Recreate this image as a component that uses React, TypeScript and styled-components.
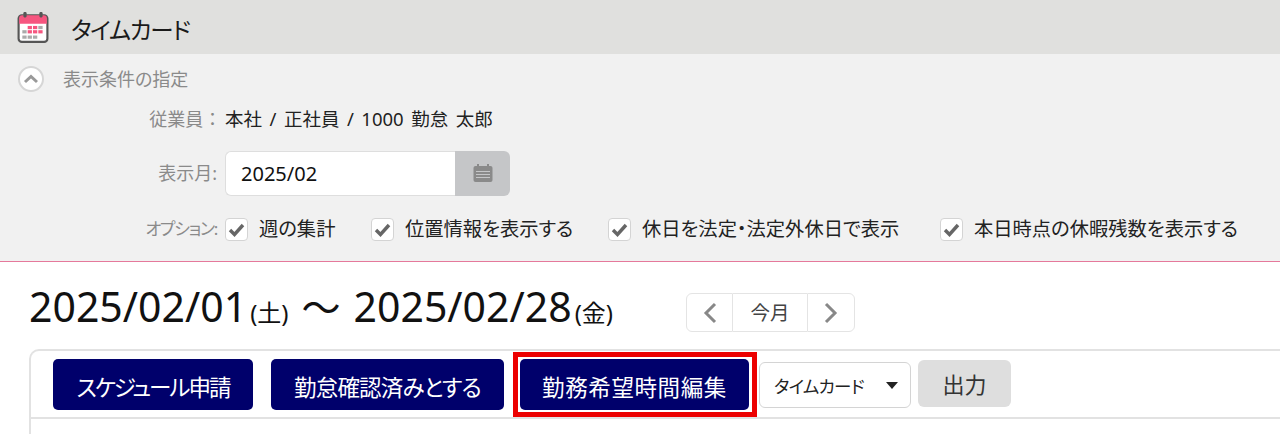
import React from "react";
import styled, { createGlobalStyle } from "styled-components";

const Global = createGlobalStyle`
  html, body { margin: 0; padding: 0; background: #fff; overflow: hidden; }
  body { font-family: "Noto Sans", "Noto Sans CJK JP", sans-serif; color: #222; font-feature-settings: "palt" 1; }
`;
const Page = styled.div`width: 1280px; height: 434px; overflow: hidden; display: flex; flex-direction: column;`;
const Header = styled.header`height: 54px; background: #e0e0de; display: flex; align-items: center; padding-left: 17px; gap: 22px; box-sizing: border-box;`;
const Title = styled.h1`margin: 5px 0 0; font-size: 23.5px; letter-spacing: -1.3px; font-weight: 400; color: #1a1a1a; line-height: 30px;`;
const Filter = styled.section`height: 208px; box-sizing: border-box; background: #f1f1f1; border-bottom: 1px solid #e5799b; display: flex; flex-direction: column;`;
const Toggle = styled.div`display: flex; align-items: center; height: 50px; padding: 0 0 0 18px; gap: 19px; color: #8a8a8a; font-size: 18px;`;
const ToggleText = styled.span`margin-top: -3px;`;
const Round = styled.span`width: 26px; height: 26px; border-radius: 50%; box-sizing: border-box; background: #fff; border: 2px solid #d6d6d6; display: flex; align-items: center; justify-content: center;`;
const Row = styled.div<{ $h: number }>`display: flex; align-items: center; height: ${(p) => p.$h}px;`;
const Label = styled.span<{ $tight?: boolean }>`width: 217px; flex: none; margin-bottom: 3px; text-align: right; color: #8a8a8a; font-size: ${(p) => (p.$tight ? 17 : 18)}px; letter-spacing: ${(p) => (p.$tight ? -1.3 : 0)}px; white-space: nowrap;`;
const Value = styled.span`margin: 0 0 2px 8px; font-size: 18.5px; word-spacing: 2.7px; color: #222; white-space: nowrap;`;
const DateGroup = styled.div`display: flex; margin-left: 8px; height: 45px;`;
const DateInput = styled.div`width: 230px; box-sizing: border-box; background: #fff; border: 1px solid #dedede; border-right: 0; border-radius: 6px 0 0 6px; padding-left: 15px; font-size: 20px; display: flex; align-items: center; color: #111;`;
const DateBtn = styled.div`width: 55px; background: #c5c6c8; border-radius: 0 6px 6px 0; display: flex; align-items: center; justify-content: center;`;
const Options = styled.div`display: flex; margin-left: 8px;`;
const Option = styled.label<{ $w: number }>`display: flex; align-items: center; width: ${(p) => p.$w}px; font-size: 19.3px; color: #222; white-space: nowrap; gap: 11px;`;
const OptionText = styled.span`margin-bottom: 3px;`;
const Check = styled.span`width: 23px; height: 23px; flex: none; box-sizing: border-box; background: #fff; border: 1px solid #d4d4d4; border-radius: 4px; display: flex; align-items: center; justify-content: center;`;
const RangeRow = styled.div`display: flex; align-items: flex-start; height: 87px; padding-left: 29px; box-sizing: border-box;`;
const Range = styled.div`font-size: 41px; line-height: 50px; margin-top: 19px; color: #111; width: 657px; white-space: nowrap; display: flex; align-items: baseline;`;
const Small = styled.span`font-size: 24px; margin-left: 3px;`;
const Tilde = styled.span`margin: 0 13px 0 13px; font-size: 39px;`;
const Pager = styled.div`display: flex; height: 39px; margin-top: 31px;`;
const PagerBtn = styled.div<{ $side: "l" | "r" }>`width: ${(p) => (p.$side === "l" ? 47 : 48)}px; box-sizing: border-box; border: 1px solid #e4e4e4; border-radius: ${(p) => (p.$side === "l" ? "6px 0 0 6px" : "0 6px 6px 0")}; display: flex; align-items: center; justify-content: center;`;
const PagerMid = styled.div`width: 74px; box-sizing: border-box; border: 1px solid #e4e4e4; border-width: 1px 0; display: flex; align-items: center; justify-content: center; font-size: 19.5px; color: #444; padding-bottom: 2px;`;
const Panel = styled.div`margin-left: 29px; border: 2px solid #e2e2e2; border-right: 0; border-bottom: 0; border-radius: 10px 0 0 0; flex: 1;`;
const Toolbar = styled.div`height: 68px; box-sizing: border-box; border-bottom: 2px solid #e2e2e2; display: flex; align-items: flex-start; padding: 8px 0 0 22px;`;
const Primary = styled.button<{ $w: number; $hl?: boolean; $ml?: number; $ls: number }>`
  position: relative; width: ${(p) => p.$w}px; height: 51px; margin-left: ${(p) => p.$ml ?? 0}px; border: 0; border-radius: 5px;
  background: #00006b; color: #fff; font: inherit; font-feature-settings: "palt" 1; font-size: 22.5px; letter-spacing: ${(p) => p.$ls}px; padding: 3px 0 0; white-space: nowrap;
  ${(p) => (p.$hl ? `&::after { content: ""; position: absolute; inset: -7px -8px -7px -7px; border: 5px solid #ec0000; }` : "")}
`;
const Select = styled.div`width: 152px; height: 46px; margin: 3px 0 0 10px; box-sizing: border-box; border: 1px solid #d4d4d4; border-radius: 6px; background: #fff; display: flex; align-items: center; justify-content: space-between; padding: 0 12px 0 14px; font-size: 17.5px; letter-spacing: -0.7px; color: #222;`;
const Arrow = styled.span`width: 0; height: 0; border: 6px solid transparent; border-top: 7px solid #222; border-bottom: 0;`;
const Output = styled.button`width: 93px; height: 47px; margin: 1px 0 0 7px; border: 0; border-radius: 6px; background: #dedede; color: #333; font: inherit; font-size: 22px; padding: 0 0 2px;`;

const Mark = () => (
  <svg width="17" height="15" viewBox="0 0 17 15"><path d="M2 8 L6.5 12.5 L15 3" fill="none" stroke="#666" strokeWidth="3.4" /></svg>
);

const CalendarLogo = () => (
  <svg width="32" height="32" viewBox="0 0 30 30">
    <rect x="1.5" y="4" width="27" height="25" rx="3" fill="#fff" stroke="#555" strokeWidth="2" />
    <path d="M2 7a3 3 0 0 1 3-3h20a3 3 0 0 1 3 3v5H2z" fill="#f6557f" />
    <rect x="6" y="1" width="3" height="5" rx="1" fill="#555" />
    <rect x="21" y="1" width="3" height="5" rx="1" fill="#555" />
    {[
      [10, 14, "#f6557f"], [15, 14, "#f6557f"], [20, 14, "#aaa"], [5, 18, "#aaa"], [10, 18, "#f6557f"], [15, 18, "#f6557f"], [20, 18, "#f6557f"],
      [5, 23, "#aaa"], [10, 23, "#aaa"], [15, 23, "#aaa"],
    ].map(([x, y, c], i) => <rect key={i} x={x as number} y={y as number} width="4" height="3" fill={c as string} />)}
  </svg>
);

export default function App() {
  return (
    <Page>
      <Global />
      <Header><CalendarLogo /><Title>タイムカード</Title></Header>
      <Filter>
        <Toggle>
          <Round><svg width="16" height="10" viewBox="0 0 16 10"><path d="M2 8 L8 2.5 L14 8" fill="none" stroke="#999" strokeWidth="3" /></svg></Round>
          <ToggleText>表示条件の指定</ToggleText>
        </Toggle>
        <Row $h={30}><Label>従業員 ：</Label><Value>本社 / 正社員 / 1000 勤怠 太郎</Value></Row>
        <Row $h={78}>
          <Label>表示月:</Label>
          <DateGroup>
            <DateInput>2025/02</DateInput>
            <DateBtn>
              <svg width="20" height="19" viewBox="0 0 20 19">
                <rect x="0.5" y="2" width="19" height="16" rx="2" fill="#8a8a8a" />
                <rect x="4" y="0" width="2" height="4" fill="#8a8a8a" /><rect x="14" y="0" width="2" height="4" fill="#8a8a8a" />
                <path d="M3 7.5h14M3 10.5h14M3 13.5h14" stroke="#c5c6c8" strokeWidth="1.2" />
              </svg>
            </DateBtn>
          </DateGroup>
        </Row>
        <Row $h={34}>
          <Label $tight>オプション:</Label>
          <Options>
            <Option $w={146}><Check><Mark /></Check><OptionText>週の集計</OptionText></Option>
            <Option $w={237}><Check><Mark /></Check><OptionText>位置情報を表示する</OptionText></Option>
            <Option $w={332}><Check><Mark /></Check><OptionText>休日を法定・法定外休日で表示</OptionText></Option>
            <Option $w={300}><Check><Mark /></Check><OptionText>本日時点の休暇残数を表示する</OptionText></Option>
          </Options>
        </Row>
      </Filter>
      <RangeRow>
        <Range>2025/02/01<Small>(土)</Small><Tilde>～</Tilde>2025/02/28<Small>(金)</Small></Range>
        <Pager>
          <PagerBtn $side="l"><svg width="14" height="22" viewBox="0 0 14 22"><path d="M12 2 L3 11 L12 20" fill="none" stroke="#888" strokeWidth="3" /></svg></PagerBtn>
          <PagerMid>今月</PagerMid>
          <PagerBtn $side="r"><svg width="14" height="22" viewBox="0 0 14 22"><path d="M2 2 L11 11 L2 20" fill="none" stroke="#888" strokeWidth="3" /></svg></PagerBtn>
        </Pager>
      </RangeRow>
      <Panel>
        <Toolbar>
          <Primary $w={200} $ls={-2}>スケジュール申請</Primary>
          <Primary $w={233} $ml={18} $ls={-0.8}>勤怠確認済みとする</Primary>
          <Primary $w={229} $ml={16} $ls={0.6} $hl>勤務希望時間編集</Primary>
          <Select>タイムカード<Arrow /></Select>
          <Output>出力</Output>
        </Toolbar>
      </Panel>
    </Page>
  );
}
